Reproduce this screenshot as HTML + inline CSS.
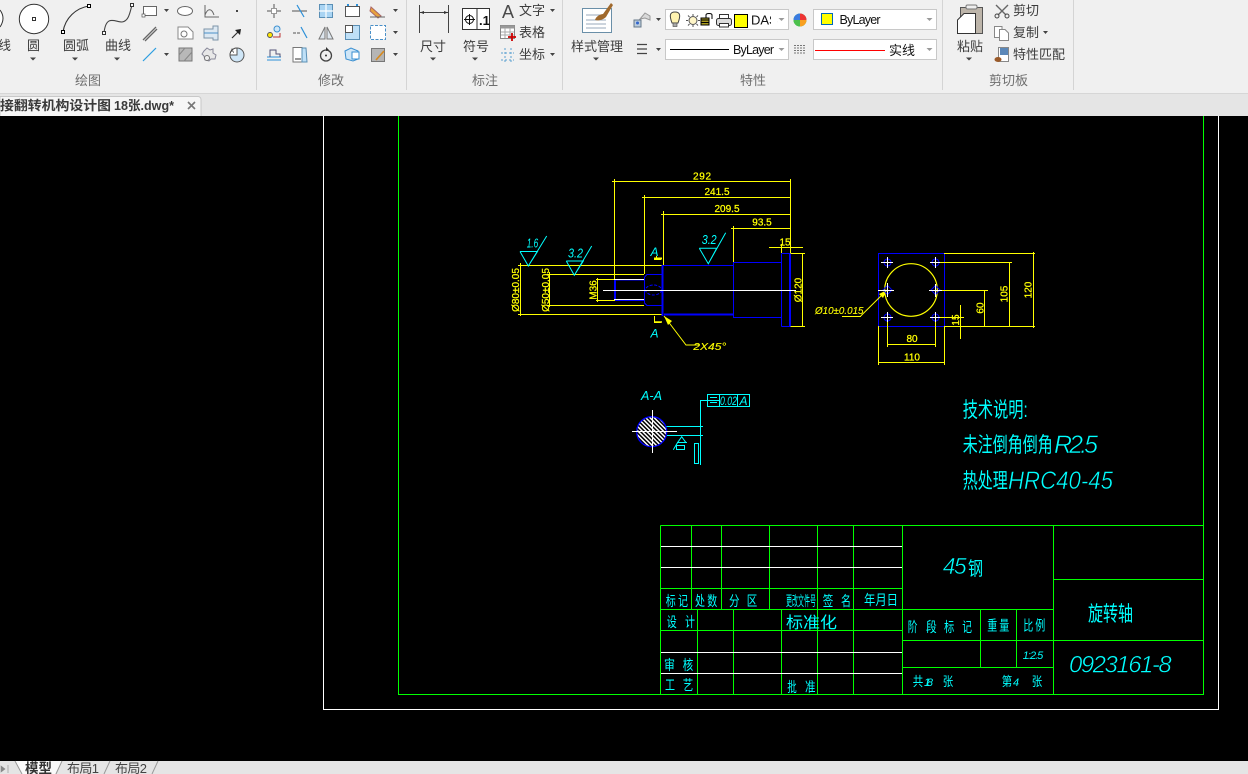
<!DOCTYPE html>
<html lang="zh">
<head>
<meta charset="utf-8">
<title>CAD</title>
<style>
html,body{margin:0;padding:0;width:1248px;height:774px;overflow:hidden;background:#000}
svg{display:block}
text{font-family:"Liberation Sans","Noto Sans CJK SC",sans-serif}
.r{font-size:13px;fill:#3c3c3c}
.c{text-anchor:middle}
.t{font-size:13px;fill:#6e6e6e;text-anchor:middle}
.y{font-size:10px;fill:#ff0;stroke:#ff0;stroke-width:.25px}
.cy{fill:#0ff}
.i{font-style:italic}
.th{stroke:#000;stroke-width:.55px}
</style>
</head>
<body>
<svg width="1248" height="774" viewBox="0 0 1248 774" xmlns="http://www.w3.org/2000/svg">
<rect width="1248" height="774" fill="#000"/>

<!-- ribbon -->
<rect width="1248" height="93" fill="#f0f0f0"/>
<rect y="93" width="1248" height="1" fill="#d6d6d6"/>
<rect y="94" width="1248" height="22" fill="#e5e5e5"/>
<g fill="#d4d4d4">
<rect x="256" y="0" width="1" height="90"/><rect x="406" y="0" width="1" height="90"/><rect x="562" y="0" width="1" height="90"/><rect x="942" y="0" width="1" height="90"/><rect x="1073" y="0" width="1" height="90"/>
</g>

<!-- tab -->
<path d="M0 116V96.500H198a3 3 0 0 1 3 3V116" fill="#f6f6f6" stroke="#c8c8c8"/>
<text x="0" y="110" font-size="13" font-weight="bold" fill="#3a3a3a" textLength="111" lengthAdjust="spacingAndGlyphs">接翻转机构设计图</text>
<text x="114" y="110" font-size="13" font-weight="bold" fill="#3a3a3a" textLength="60" lengthAdjust="spacingAndGlyphs">18张.dwg*</text>
<path d="M188 102l7 7M195 102l-7 7" stroke="#777" stroke-width="1.600"/>

<!-- draw panel -->
<path d="M0 10Q6 18 0 27" fill="#fff" stroke="#333"/>
<circle cx="34" cy="19" r="14.700" fill="#fff" stroke="#333"/>
<rect x="32.500" y="17.500" width="3" height="3" fill="#fff" stroke="#333"/>
<path d="M63 32C65 18 76 8 89 6" fill="none" stroke="#333" stroke-width="1.100"/>
<rect x="61.500" y="30.500" width="3" height="3" fill="#fff" stroke="#000"/>
<rect x="87.500" y="4.500" width="3" height="3" fill="#fff" stroke="#000"/>
<path d="M104 33C106 14 115 22 122 22C129 21 130 12 132 5" fill="none" stroke="#444" stroke-width="1.100"/>
<rect x="102.500" y="31.500" width="3" height="3" fill="#fff" stroke="#333"/>
<rect x="130.500" y="3.500" width="3" height="3" fill="#fff" stroke="#333"/>
<text x="-2" y="50" class="r">线</text>
<text x="33.500" y="50" class="r c">圆</text>
<text x="76" y="50" class="r c">圆弧</text>
<text x="118" y="50" class="r c">曲线</text>
<g fill="#444">
<path d="M30 57.500h6l-3 3ZM72 57.500h6l-3 3ZM114 57.500h6l-3 3ZM430 57.500h6l-3 3ZM472 57.500h6l-3 3ZM593 57.500h6l-3 3ZM966 57.500h6l-3 3Z"/>
<path d="M164 9h5l-2.500 3ZM164 53h5l-2.500 3ZM393 9h5l-2.500 3ZM393 31h5l-2.500 3ZM393 53h5l-2.500 3ZM550 9h5l-2.500 3ZM550 53h5l-2.500 3ZM656 18h5l-2.500 3ZM656 48h5l-2.500 3ZM1043 31h5l-2.500 3Z"/>
</g>
<rect x="143.500" y="6.500" width="13" height="9" fill="#fff" stroke="#666"/>
<rect x="142" y="14" width="3" height="3" fill="#fff" stroke="#555" stroke-width=".7"/>
<ellipse cx="185" cy="11" rx="7.500" ry="4.500" fill="#fff" stroke="#666"/>
<path d="M205 5V17H219M205 15C208 7 212 9 214 15" fill="none" stroke="#666"/>
<rect x="236" y="10" width="2" height="2" fill="#444"/>
<path d="M143 40L156 27M145 41L157 29" stroke="#666" stroke-width="1.300"/>
<path d="M178 27H188L193 32V39H178Z" fill="#fff" stroke="#888"/>
<circle cx="184" cy="34" r="3" fill="none" stroke="#777"/>
<path d="M204 29H213V26H218V40H213V38H204Z" fill="#dce8f2" stroke="#7d93a8"/>
<path d="M204 33H218" stroke="#4a90c8"/>
<path d="M232 38L239 31" stroke="#333" stroke-width="1.200"/><path d="M235 30L241 29L240 35Z" fill="#222"/>
<path d="M143 61L156 48" stroke="#2b9de0" stroke-width="1.200"/>
<rect x="179" y="48" width="13" height="13" fill="#b8b8b8" stroke="#777"/>
<path d="M179 55l6-7M184 61l8-9" stroke="#888"/>
<path d="M204 51l3-3 3 2 3-1v4l3 2-1 4h-4l-2 2-4-1-1-4-2-2Z" fill="#e8e8e8" stroke="#889"/>
<circle cx="207" cy="58" r="2.500" fill="#f0f0f0" stroke="#777"/>
<circle cx="237" cy="55" r="7" fill="#cfe6f7" stroke="#555"/>
<path d="M237 48V55H230A7 7 0 0 1 237 48Z" fill="#fff" stroke="#555"/>
<text x="230" y="53" font-size="6" fill="#333">A</text>
<text x="88" y="85" class="t">绘图</text>

<!-- modify panel -->
<path d="M267 11H272M276 11H281M274 4V9M274 13V18" stroke="#555"/>
<rect x="271.500" y="8.500" width="5" height="5" fill="#fff" stroke="#999"/>
<path d="M292 11H307" stroke="#555"/><path d="M297 5L304 17" stroke="#2b8fd8" stroke-width="1.200"/>
<rect x="319.500" y="4.500" width="13" height="13" fill="#a9d4f3" stroke="#5a8fb5"/>
<path d="M326 4V18M319 11H333" stroke="#fff" stroke-width="1.200"/>
<rect x="345.500" y="6.500" width="14" height="10" fill="#fff" stroke="#555"/>
<path d="M348 6v-2M357 6v-2" stroke="#2b8fd8" stroke-width="2"/>
<path d="M371 7L381 16L378 18L370 11Z" fill="#e8a33d" stroke="#a66"/>
<path d="M370 17H385" stroke="#666"/>
<circle cx="270" cy="35" r="2.500" fill="#ffe600" stroke="#555"/>
<circle cx="277" cy="29" r="3" fill="#cfe6f7" stroke="#3a8fd0"/>
<path d="M273 37H280V33" stroke="#b33" fill="none"/>
<path d="M293 33H301" stroke="#555" stroke-dasharray="3 1"/><path d="M301 27L307 38" stroke="#2b8fd8" stroke-width="1.200"/>
<path d="M325 27V39H319ZM327 27V39H333Z" fill="#dde6ee" stroke="#777"/>
<rect x="345.500" y="25.500" width="14" height="14" fill="#bfe0f7" stroke="#5a8fb5"/>
<rect x="345.500" y="25.500" width="7" height="7" fill="#fff" stroke="#555"/>
<rect x="370.500" y="25.500" width="15" height="14" fill="#fff" stroke="#4a90c8" stroke-dasharray="3 1.500"/>
<path d="M267 57H281M267 60H281" stroke="#2b8fd8"/>
<path d="M270 57V50H276V54H280V57" fill="none" stroke="#557"/>
<path d="M293 47.500H302V62H293Z" fill="#fff" stroke="#777"/><path d="M302 48H306L307 62H302Z" fill="#bfe0f7" stroke="#5a8fb5"/>
<path d="M295 59H301" stroke="#333"/>
<circle cx="326" cy="55.500" r="5.500" fill="none" stroke="#444" stroke-width="1.300"/><path d="M326 47l3 3-3 1Z" fill="#333"/>
<circle cx="326" cy="55.500" r="1" fill="#333"/>
<path d="M345 51l6-3 7 3v8l-5 2-7-2Z" fill="#cfe6f7" stroke="#3a8fd0"/>
<rect x="352" y="52" width="7" height="7" fill="#fff" stroke="#3a8fd0"/>
<rect x="371.500" y="48.500" width="13" height="13" fill="#b5b5b5" stroke="#777"/>
<path d="M376 60L384 51" stroke="#d68a20" stroke-width="1.600"/>
<text x="331" y="85" class="t">修改</text>

<!-- dim panel -->
<path d="M419.500 5V33M448.500 5V33M420 12.500H448" stroke="#444" fill="none"/>
<path d="M420 12.500l4-1.500v3ZM448 12.500l-4-1.500v3Z" fill="#333"/>
<rect x="462.500" y="8.500" width="27" height="21" fill="#fff" stroke="#333"/>
<path d="M477 8V30" stroke="#333"/>
<circle cx="469.500" cy="19.500" r="4" fill="none" stroke="#111"/>
<path d="M464 19.500H475M469.500 14V25" stroke="#111"/>
<text x="479" y="25" font-size="13" font-weight="bold" fill="#111">.1</text>
<text x="433" y="51" class="r c" font-size="14">尺寸</text>
<text x="476" y="51" class="r c">符号</text>
<text x="508" y="18" font-size="18" fill="#4a4a4a" text-anchor="middle">A</text>
<text x="519" y="15" class="r" textLength="26">文字</text>
<rect x="500.500" y="25.500" width="14" height="13" fill="#fff" stroke="#888"/>
<rect x="500.500" y="25.500" width="14" height="3" fill="#999"/>
<path d="M505 28V38M510 28V38M501 32H514M501 35H514" stroke="#aaa"/>
<path d="M508 37H516M512 33V41" stroke="#c00" stroke-width="1.800"/>
<text x="519" y="37" class="r" textLength="26">表格</text>
<path d="M501 53H514M501 60H514M505 48V62M511 48V62" stroke="#5aa0d0" stroke-dasharray="2 2" fill="none"/>
<text x="519" y="59" class="r" textLength="26">坐标</text>
<text x="485" y="85" class="t">标注</text>

<!-- style -->
<rect x="582.500" y="8.500" width="29" height="24" fill="#fff" stroke="#6a8fa8"/>
<path d="M586 15H604M586 20H606M586 24H606M586 28H606" stroke="#9ab" stroke-width="1"/>
<path d="M595 20C596 16 601 14 603 14L611 3L613 5L606 17C603 20 598 21 595 20Z" fill="#a0692c"/>
<text x="597" y="51" class="r c">样式管理</text>

<!-- properties -->
<path d="M640 19l5-6 5 3v4l-5-2Z" fill="#d9d9d9" stroke="#999"/>
<rect x="634" y="20" width="7" height="7" fill="#bcd" stroke="#678"/>
<circle cx="637.500" cy="23" r="1.500" fill="#36c"/>
<path d="M637 44.500H647M637 49H647M637 53.500H647" stroke="#444" stroke-width="1.200"/>

<rect x="665.500" y="9.500" width="123" height="20" fill="#fff" stroke="#c8c8c8"/>
<path d="M672 23C669 15 670 12 675 12S681 15 678 23Z" fill="#fff3b0" stroke="#444"/>
<rect x="673" y="23" width="4" height="3.500" fill="#aaa" stroke="#444" stroke-width=".6"/>
<circle cx="693" cy="20.500" r="4" fill="#fff6c8" stroke="#555"/>
<path d="M686 20.500H688M698 20.500H700M693 14V16M693 25V27M688 15.500L689.500 17M698 15.500L696.500 17M688 25.500L689.500 24M698 25.500L696.500 24" stroke="#555"/>
<rect x="701" y="18" width="8" height="7" fill="#a99a20" stroke="#000"/>
<path d="M701 20H709M701 22.500H709" stroke="#000"/>
<path d="M706 18V15C706 13 712 13 712 15V19" fill="none" stroke="#000"/>
<rect x="716.500" y="18.500" width="15" height="7" rx="2" fill="#ddd" stroke="#333"/>
<rect x="719.500" y="14.500" width="9" height="4" fill="#fff" stroke="#333"/>
<rect x="719.500" y="23.500" width="9" height="3.500" fill="#fff" stroke="#333"/>
<rect x="734.500" y="14.500" width="13" height="13" fill="#ff0" stroke="#000"/>
<text x="751" y="24.500" font-size="13" fill="#111">DAS</text>
<rect x="771" y="11" width="6" height="17" fill="#fff"/>
<path d="M778.500 18h6l-3 3Z" fill="#999"/>

<circle cx="800" cy="20" r="6.500" fill="#3c6"/>
<path d="M800 20V13.500A6.500 6.500 0 0 1 806.500 20Z" fill="#e33"/>
<path d="M800 20H806.500A6.500 6.500 0 0 1 800 26.500Z" fill="#f9a020"/>
<path d="M800 20V26.500A6.500 6.500 0 0 1 793.500 20Z" fill="#4cc04c"/>
<path d="M800 20H793.500A6.500 6.500 0 0 1 800 13.500Z" fill="#3a7be0"/>

<rect x="665.500" y="39.500" width="123" height="20" fill="#fff" stroke="#c8c8c8"/>
<path d="M670 49.500H729" stroke="#000"/>
<text x="733" y="54" font-size="12.500" fill="#111" textLength="41">ByLayer</text>
<path d="M778.500 48h6l-3 3Z" fill="#999"/>
<path d="M794 45.500H806M794 48H806M794 50.500H806M794 53H806" stroke="#777" stroke-dasharray="2 1"/>

<rect x="813.500" y="9.500" width="123" height="20" fill="#fff" stroke="#c8c8c8"/>
<rect x="821.500" y="13.500" width="11" height="11" fill="#ff0" stroke="#0068b8"/>
<text x="839.500" y="24" font-size="12.500" fill="#111" textLength="41">ByLayer</text>
<path d="M926.500 18h6l-3 3Z" fill="#999"/>
<rect x="813.500" y="39.500" width="123" height="20" fill="#fff" stroke="#c8c8c8"/>
<path d="M815 50.500H885" stroke="#f00"/>
<text x="889" y="55" font-size="13" fill="#111" textLength="26">实线</text>
<path d="M926.500 48h6l-3 3Z" fill="#999"/>
<text x="753" y="85" class="t">特性</text>

<!-- clipboard -->
<rect x="960.500" y="7.500" width="22" height="26" fill="#bdb5aa" stroke="#555"/>
<rect x="966" y="5" width="11" height="4" rx="1.500" fill="#eee" stroke="#777"/>
<path d="M957.500 20L964 13.500H975.500V33.500H957.500Z" fill="#fff" stroke="#333"/>
<text x="970" y="51" class="r c">粘贴</text>
<path d="M996 5L1006 15M1008 5L998 15" stroke="#666" stroke-width="1.400"/>
<circle cx="997" cy="16" r="2" fill="none" stroke="#444"/><circle cx="1007" cy="16" r="2" fill="none" stroke="#444"/>
<text x="1013" y="15" class="r" textLength="26">剪切</text>
<path d="M994.500 26.500H1002V37.500H994.500Z" fill="#fff" stroke="#888"/>
<path d="M999.500 29.500H1005L1008.500 33V40.500H999.500Z" fill="#fff" stroke="#888"/>
<text x="1013" y="37" class="r" textLength="26">复制</text>
<rect x="998.500" y="47.500" width="10" height="14" fill="#fff" stroke="#888"/>
<rect x="1000" y="48" width="8" height="7" fill="#5b87b8"/>
<ellipse cx="998" cy="59.500" rx="3.500" ry="2.500" fill="#9a5a2a"/>
<text x="1013" y="59" class="r" textLength="52">特性匹配</text>
<text x="1008.500" y="85" class="t">剪切板</text>

<!-- sheet frames -->
<g shape-rendering="crispEdges" fill="none">
<path d="M323.500 116V709.500H1218.500V116" stroke="#fff"/>
<path d="M398.500 116V694.500H1203.500V116" stroke="#0f0"/>
</g>

<!-- title block -->
<g shape-rendering="crispEdges" fill="none" stroke="#0f0">
<path d="M660.500 525.500H1203.500M660.500 525.500V694.500"/>
<path d="M660.500 588.500H902.500M660.500 609.500H1053.500M660.500 630.500H902.500"/>
<path d="M691.500 525.500V609.500M721.500 525.500V609.500M769.500 525.500V609.500M817.500 525.500V694.500M853.500 525.500V694.500M902.500 525.500V694.500"/>
<path d="M697.500 609.500V694.500M733.500 609.500V694.500M781.500 609.500V694.500"/>
<path d="M1053.500 525.500V694.500M1053.500 579.500H1203.500M902.500 640.500H1203.500M902.500 667.500H1053.500M980.500 609.500V667.500M1016.500 609.500V667.500"/>
</g>
<g shape-rendering="crispEdges" fill="none" stroke="#fff">
<path d="M661 546.500H902M661 567.500H902M661 652.500H902M661 673.500H902"/>
</g>

<g font-size="14">
<text class="cy" x="665.700" y="606" textLength="10" lengthAdjust="spacingAndGlyphs">标</text>
<text class="cy" x="678" y="606" textLength="10" lengthAdjust="spacingAndGlyphs">记</text>
<text class="cy" x="695" y="606" textLength="10" lengthAdjust="spacingAndGlyphs">处</text>
<text class="cy" x="707.300" y="606" textLength="10" lengthAdjust="spacingAndGlyphs">数</text>
<text class="cy" x="729" y="606" textLength="10.500" lengthAdjust="spacingAndGlyphs">分</text>
<text class="cy" x="746.700" y="606" textLength="10.500" lengthAdjust="spacingAndGlyphs">区</text>
<text class="cy" x="786" y="606" textLength="30" lengthAdjust="spacingAndGlyphs">更改文件号</text>
<text class="cy" x="822.700" y="606" textLength="10.500" lengthAdjust="spacingAndGlyphs">签</text>
<text class="cy" x="841" y="606" textLength="10" lengthAdjust="spacingAndGlyphs">名</text>
<text class="cy" x="864" y="605" textLength="34" lengthAdjust="spacingAndGlyphs">年月日</text>
<text class="cy" x="666.700" y="627" textLength="10" lengthAdjust="spacingAndGlyphs">设</text>
<text class="cy" x="685" y="627" textLength="10" lengthAdjust="spacingAndGlyphs">计</text>
<text class="cy" x="786" y="628" font-size="16" textLength="51" lengthAdjust="spacingAndGlyphs">标准化</text>
<text class="cy" x="664" y="670" textLength="11" lengthAdjust="spacingAndGlyphs">审</text>
<text class="cy" x="682.700" y="670" textLength="10.500" lengthAdjust="spacingAndGlyphs">核</text>
<text class="cy" x="665" y="690" textLength="10" lengthAdjust="spacingAndGlyphs">工</text>
<text class="cy" x="682.700" y="690" textLength="10.500" lengthAdjust="spacingAndGlyphs">艺</text>
<text class="cy" x="787.300" y="692" textLength="9.500" lengthAdjust="spacingAndGlyphs">批</text>
<text class="cy" x="805" y="692" textLength="10.500" lengthAdjust="spacingAndGlyphs">准</text>
<text class="cy i th" x="942.700" y="574" font-size="23" textLength="24" lengthAdjust="spacing">45</text>
<text class="cy" x="968" y="575" font-size="19" textLength="15" lengthAdjust="spacingAndGlyphs">钢</text>
<text class="cy" x="1088" y="621" font-size="21" textLength="45" lengthAdjust="spacingAndGlyphs">旋转轴</text>
<text class="cy" x="907.700" y="632" textLength="9.700" lengthAdjust="spacingAndGlyphs">阶</text>
<text class="cy" x="926" y="632" textLength="10.700" lengthAdjust="spacingAndGlyphs">段</text>
<text class="cy" x="944" y="632" textLength="10.300" lengthAdjust="spacingAndGlyphs">标</text>
<text class="cy" x="962.300" y="632" textLength="9.700" lengthAdjust="spacingAndGlyphs">记</text>
<text class="cy" x="987.300" y="630.500" textLength="10" lengthAdjust="spacingAndGlyphs">重</text>
<text class="cy" x="999.300" y="630.500" textLength="10" lengthAdjust="spacingAndGlyphs">量</text>
<text class="cy" x="1023.300" y="630.500" textLength="10" lengthAdjust="spacingAndGlyphs">比</text>
<text class="cy" x="1035.300" y="630.500" textLength="10" lengthAdjust="spacingAndGlyphs">例</text>
<text class="cy i" x="1022.700" y="659" font-size="11" textLength="20.600">1:2.5</text>
<text class="cy i th" x="1069" y="672.500" font-size="24" textLength="102.700">0923161-8</text>
<text class="cy" x="912.700" y="686" font-size="13" textLength="10.500" lengthAdjust="spacingAndGlyphs">共</text>
<text class="cy i" x="924" y="686" font-size="11" textLength="9">18</text>
<text class="cy" x="942.700" y="686" font-size="13" textLength="10.500" lengthAdjust="spacingAndGlyphs">张</text>
<text class="cy" x="1001.700" y="686" font-size="13" textLength="10.500" lengthAdjust="spacingAndGlyphs">第</text>
<text class="cy i" x="1013" y="686" font-size="11">4</text>
<text class="cy" x="1031.700" y="686" font-size="13" textLength="10.500" lengthAdjust="spacingAndGlyphs">张</text>
</g>

<!-- tech notes -->
<text class="cy" x="962.700" y="417" font-size="21" textLength="65" lengthAdjust="spacingAndGlyphs">技术说明:</text>
<text class="cy" x="962.700" y="452" font-size="21" textLength="90" lengthAdjust="spacingAndGlyphs">未注倒角倒角</text>
<text class="cy i th" x="1054" y="453" font-size="25" textLength="44" lengthAdjust="spacing">R2.5</text>
<text class="cy" x="962.700" y="488" font-size="21" textLength="45" lengthAdjust="spacingAndGlyphs">热处理</text>
<text class="cy i th" x="1008" y="489" font-size="25" textLength="105" lengthAdjust="spacingAndGlyphs">HRC40-45</text>

<!-- shaft dims yellow -->
<g shape-rendering="crispEdges" fill="none" stroke="#ff0">
<path d="M614.500 179V280M612 181.500H790.500"/>
<path d="M644.500 195V274M642 197.500H790.500"/>
<path d="M663.500 211V265M661 214.500H790.500"/>
<path d="M733.500 226V262M731 228.500H790.500"/>
<path d="M790.500 179V253M769 247.500H803M781.500 244V253"/>
<path d="M790 253.500H805M790 326.500H805M802.500 253V327"/>
<path d="M518 265.500H663M518 314.500H663M520.500 263V316"/>
<path d="M547 274.500H644M547 305.500H644M549.500 272V307"/>
<path d="M596 279.500H615M596 300.500H615M597.500 278V302"/>
<path d="M654 259.500H661M656.500 256V260"/>
<path d="M654.500 316V322.500H661"/>
</g>
<path d="M654 258.500H662" stroke="#ff0" stroke-width="2"/>
<path d="M655 322H662" stroke="#ff0" stroke-width="1.500"/>
<path d="M664 316L686 345H700" fill="none" stroke="#ff0"/>
<path d="M664 316L672 321L668 325Z" fill="#ff0"/>

<!-- shaft blue -->
<g shape-rendering="crispEdges" fill="none" stroke="#00f">
<path d="M615 280H644M615 300.500H644"/>
<path d="M644.500 277L647 274.500H663M644.500 303L647 305.500H663M644.500 277V303"/>
<path d="M663 265.500H733.500M733.500 262V318M733.500 262.500H781.500M733.500 317.500H781.500M781.500 253.500V326.500M781.500 253.500H790.500M781.500 326.500H790.500"/>
</g>
<g shape-rendering="crispEdges" fill="none" stroke="#00f" stroke-width="2">
<path d="M615 280V300M662.500 265V316M664 314.500H733.500M790 254V326"/>
</g>
<ellipse cx="653.500" cy="290" rx="8" ry="5" fill="none" stroke="#00f" stroke-dasharray="3 1.500"/>
<g shape-rendering="crispEdges" fill="none" stroke="#fff">
<path d="M614 279.500H644M614 299.500H644M603 290.500H796"/>
</g>

<!-- roughness -->
<g fill="none" stroke="#0ff">
<path d="M520 251.500H537.500L528.300 266L520 251.500M528.300 266L546.700 236"/>
<path d="M566.300 261H583.300L574.300 275.300L566.300 261M574.300 275.300L591.700 246"/>
<path d="M699.300 248.300H716.700L708.300 263.700L699.300 248.300M708.300 263.700L725.700 232.700"/>
</g>
<text class="cy i" x="526.700" y="247.300" font-size="13" textLength="11.500" lengthAdjust="spacingAndGlyphs">1.6</text>
<text class="cy i" x="568" y="257.500" font-size="13" textLength="15" lengthAdjust="spacingAndGlyphs">3.2</text>
<text class="cy i" x="701.700" y="244" font-size="13" textLength="15" lengthAdjust="spacingAndGlyphs">3.2</text>
<text class="cy i" x="650.500" y="256" font-size="12">A</text>
<text class="cy i" x="650.500" y="337.700" font-size="12">A</text>
<text class="y i" x="693.300" y="350" font-size="13" textLength="33" lengthAdjust="spacingAndGlyphs" style="stroke-width:.1px">2X45°</text>

<!-- dim text -->
<text class="y c" x="702" y="179.500" textLength="18">292</text>
<text class="y c" x="717" y="195">241.5</text>
<text class="y c" x="727" y="212">209.5</text>
<text class="y c" x="762" y="225.500">93.5</text>
<text class="y c" x="785" y="245.500">15</text>
<text class="y c" transform="translate(519 290) rotate(-90)">Ø80±0.05</text>
<text class="y c" transform="translate(549 290) rotate(-90)">Ø50±0.05</text>
<text class="y c" transform="translate(596.500 290) rotate(-90)">M36</text>
<text class="y c" transform="translate(801.500 290) rotate(-90)">Ø120</text>

<!-- end view -->
<rect x="878.500" y="253.500" width="66" height="73" fill="none" stroke="#00f" stroke-width="1.300" shape-rendering="crispEdges"/>
<circle cx="911" cy="290" r="26.300" fill="none" stroke="#ff0" stroke-width="1.200"/>
<g shape-rendering="crispEdges" fill="none" stroke="#ff0">
<path d="M944 253.500H1035M944 326.500H1035M1033.500 252V328"/>
<path d="M935 262.500H1012M1009.500 262V326"/>
<path d="M935 290.500H988M984.500 290V326"/>
<path d="M935 317.500H964M960.500 305V339"/>
<path d="M887.500 317V347M935.500 317V347M887 344.500H936"/>
<path d="M878.500 326V365M944.500 326V365M878 362.500H945"/>
<path d="M842 316.500H861"/>
</g>
<path d="M860.700 316L887 290" fill="none" stroke="#ff0"/>
<path d="M887 290l-8 4 4 4Z" fill="#ff0"/>
<g fill="none" stroke="#00f">
<circle cx="887.500" cy="262.500" r="3.500"/><circle cx="935.500" cy="262.500" r="3.500"/><circle cx="887.500" cy="317.500" r="3.500"/><circle cx="935.500" cy="317.500" r="3.500"/>
<path d="M887.500 285.500l4.500 4.500-4.500 4.500-4.500-4.500ZM935.500 285.500l4.500 4.500-4.500 4.500-4.500-4.500Z"/>
</g>
<g shape-rendering="crispEdges" stroke="#fff" fill="none">
<path d="M881 262.500H893M887.500 257V268M930 262.500H940M935.500 257V268M881 317.500H893M887.500 312V322M930 317.500H940M935.500 312V322"/>
<path d="M878 290.500H894M887.500 283V297M929 290.500H942M935.500 284V297"/>
</g>
<text class="y c" x="912" y="342">80</text>
<text class="y c" x="912" y="360.500">110</text>
<text class="y c" transform="translate(1007.500 294) rotate(-90)">105</text>
<text class="y c" transform="translate(1031.500 290) rotate(-90)">120</text>
<text class="y c" transform="translate(983.500 308) rotate(-90)">60</text>
<text class="y c" transform="translate(959 320) rotate(-90)" font-size="9">15</text>
<text class="y i" x="815" y="314" font-size="12.500" textLength="48.500" lengthAdjust="spacingAndGlyphs" style="stroke-width:.1px">Ø10±0.015</text>

<!-- section A-A -->
<defs>
<pattern id="h" width="3" height="3" patternUnits="userSpaceOnUse" patternTransform="rotate(45)">
<rect width="3" height="3" fill="#000"/><rect width="3" height="1.500" fill="#fff"/>
</pattern>
</defs>
<circle cx="651.700" cy="431.700" r="15" fill="url(#h)" stroke="#00f" stroke-width="1.300"/>
<g shape-rendering="crispEdges" fill="none" stroke="#fff">
<path d="M632 431.500H677M652.500 410V453"/>
</g>
<g shape-rendering="crispEdges" fill="none" stroke="#0ff">
<path d="M666.700 426.500H703M667 435.500H703M700.500 400V465M700 400.500H720"/>
<rect x="707.500" y="394.500" width="42" height="12"/>
<path d="M719.500 394V407M737.500 394V407M710 397.500H717M710 402.500H717"/>
<rect x="694.500" y="443.500" width="4" height="20"/>
<rect x="676.500" y="445.500" width="8" height="4"/>
<path d="M677 442.500H687"/>
</g>
<path d="M673.300 449.700L677.500 442.700L681.700 436.700L686 442.700" fill="none" stroke="#0ff"/>
<text class="cy i" x="641" y="400" font-size="12.500" textLength="21" lengthAdjust="spacingAndGlyphs">A-A</text>
<text class="cy i" x="720" y="405" font-size="11.500" textLength="17" lengthAdjust="spacingAndGlyphs">0.02</text>
<text class="cy i" x="739.500" y="405" font-size="12">A</text>

<!-- bottom bar -->
<rect y="761" width="1248" height="13" fill="#e5e5e5"/>
<path d="M15 761L22 774H55L62 761Z" fill="#fafafa"/>
<path d="M1 766l4 3-4 3ZM8 765V773" fill="#888" stroke="#888" stroke-width=".6"/>
<path d="M15 761L22 774M62 761L56 774M110 761L104 774M158 761L152 774" stroke="#999" fill="none"/>
<text x="25" y="773" font-size="13.500" font-weight="bold" fill="#333" textLength="27">模型</text>
<text x="67" y="773" font-size="13" fill="#444" textLength="32">布局1</text>
<text x="115" y="773" font-size="13" fill="#444" textLength="32">布局2</text>
</svg>
</body>
</html>
